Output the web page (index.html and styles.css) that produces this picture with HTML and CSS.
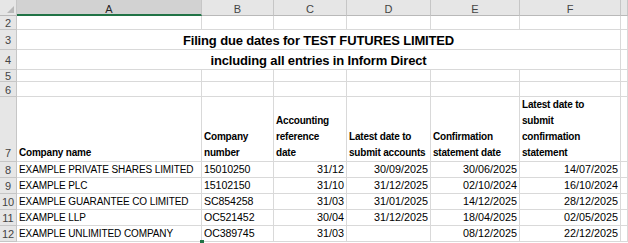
FILE: index.html
```html
<!DOCTYPE html>
<html>
<head>
<meta charset="utf-8">
<link rel="stylesheet" href="styles.css">
</head>
<body>
<div class="sheet">
  <div class="hd corner"><span class="tri"></span></div>
  <div class="hd col sel">A</div>
  <div class="hd col">B</div>
  <div class="hd col">C</div>
  <div class="hd col">D</div>
  <div class="hd col">E</div>
  <div class="hd col">F</div>
  <div class="hd col"></div>

  <div class="hd rn">2</div>
  <div class="c"></div><div class="c"></div><div class="c"></div><div class="c"></div><div class="c"></div><div class="c"></div><div class="c"></div>

  <div class="hd rn">3</div>
  <div class="c title span6">Filing due dates for TEST FUTURES LIMITED</div><div class="c"></div>

  <div class="hd rn">4</div>
  <div class="c title span6">including all entries in Inform Direct</div><div class="c"></div>

  <div class="hd rn">5</div>
  <div class="c"></div><div class="c"></div><div class="c"></div><div class="c"></div><div class="c"></div><div class="c"></div><div class="c"></div>

  <div class="hd rn">6</div>
  <div class="c"></div><div class="c"></div><div class="c"></div><div class="c"></div><div class="c"></div><div class="c"></div><div class="c"></div>

  <div class="hd rn rbot">7</div>
  <div class="c th">Company name</div>
  <div class="c th">Company<br>number</div>
  <div class="c th">Accounting<br>reference<br>date</div>
  <div class="c th">Latest date to<br>submit accounts</div>
  <div class="c th">Confirmation<br>statement date</div>
  <div class="c th">Latest date to<br>submit<br>confirmation<br>statement</div>
  <div class="c"></div>

  <div class="hd rn">8</div>
  <div class="c td">EXAMPLE PRIVATE SHARES LIMITED</div>
  <div class="c td code">15010250</div>
  <div class="c td num">31/12</div>
  <div class="c td num">30/09/2025</div>
  <div class="c td num">30/06/2025</div>
  <div class="c td num">14/07/2025</div>
  <div class="c"></div>

  <div class="hd rn">9</div>
  <div class="c td">EXAMPLE PLC</div>
  <div class="c td code">15102150</div>
  <div class="c td num">31/10</div>
  <div class="c td num">31/12/2025</div>
  <div class="c td num">02/10/2024</div>
  <div class="c td num">16/10/2024</div>
  <div class="c"></div>

  <div class="hd rn">10</div>
  <div class="c td">EXAMPLE GUARANTEE CO LIMITED</div>
  <div class="c td code">SC854258</div>
  <div class="c td num">31/03</div>
  <div class="c td num">31/01/2025</div>
  <div class="c td num">14/12/2025</div>
  <div class="c td num">28/12/2025</div>
  <div class="c"></div>

  <div class="hd rn">11</div>
  <div class="c td">EXAMPLE LLP</div>
  <div class="c td code">OC521452</div>
  <div class="c td num">30/04</div>
  <div class="c td num">31/12/2025</div>
  <div class="c td num">18/04/2025</div>
  <div class="c td num">02/05/2025</div>
  <div class="c"></div>

  <div class="hd rn">12</div>
  <div class="c td">EXAMPLE UNLIMITED COMPANY</div>
  <div class="c td code">OC389745</div>
  <div class="c td num">31/03</div>
  <div class="c td num"></div>
  <div class="c td num">08/12/2025</div>
  <div class="c td num">22/12/2025</div>
  <div class="c"></div>
</div>
<span class="handle"></span>
</body>
</html>
```

FILE: styles.css
```css
html, body {
  margin: 0;
  padding: 0;
  background: #fff;
}
body {
  width: 628px;
  height: 243px;
  overflow: hidden;
  position: relative;
  font-family: "Liberation Sans", Arial, sans-serif;
  color: #000;
}
.sheet {
  display: grid;
  grid-template-columns: 17px 185px 72px 73px 84px 89px 101px 7px;
  grid-template-rows: 16px 14px 20px 20px 12px 15px 65px 16px 16px 16px 16px 16px;
}
.c, .hd {
  box-sizing: border-box;
  border-right: 1px solid #d9d9d9;
  border-bottom: 1px solid #d9d9d9;
  overflow: hidden;
  white-space: nowrap;
}
.hd {
  background: #e6e6e6;
  color: #444;
  font-size: 11px;
  display: flex;
  align-items: center;
  justify-content: center;
  border-color: #c6c6c6;
}
.col {
  border-bottom: 1px solid #b9b9b9;
  padding-top: 3px;
}
.col.sel {
  border-bottom: 2px solid #217346;
  background: #d2d2d2;
  color: #262626;
}
.corner {
  position: relative;
  border-bottom: 1px solid #b9b9b9;
}
.tri {
  position: absolute;
  right: 2px;
  bottom: 2px;
  width: 0;
  height: 0;
  border-left: 7px solid transparent;
  border-bottom: 7px solid #b9b9b9;
}
.rn {
  font-size: 11px;
  padding-top: 1px;
}
.rbot {
  align-items: flex-end;
  padding-bottom: 2px;
}
.span6 {
  grid-column: span 6;
}
.title {
  font-weight: bold;
  font-size: 13px;
  letter-spacing: -0.15px;
  text-align: center;
  line-height: 19px;
  padding-top: 1px;
}
.th {
  font-weight: bold;
  font-size: 10px;
  line-height: 16px;
  display: flex;
  align-items: flex-end;
  padding: 0 0 0 2px;
  letter-spacing: -0.2px;
}
.td {
  font-size: 10px;
  line-height: 15px;
  padding: 0 2px;
  letter-spacing: -0.1px;
}
.code {
  font-size: 10.6px;
}
.num {
  text-align: right;
  font-size: 10.8px;
  letter-spacing: 0;
}
.handle {
  position: absolute;
  left: 200px;
  top: 240px;
  width: 4px;
  height: 3px;
  background: #217346;
}
```
